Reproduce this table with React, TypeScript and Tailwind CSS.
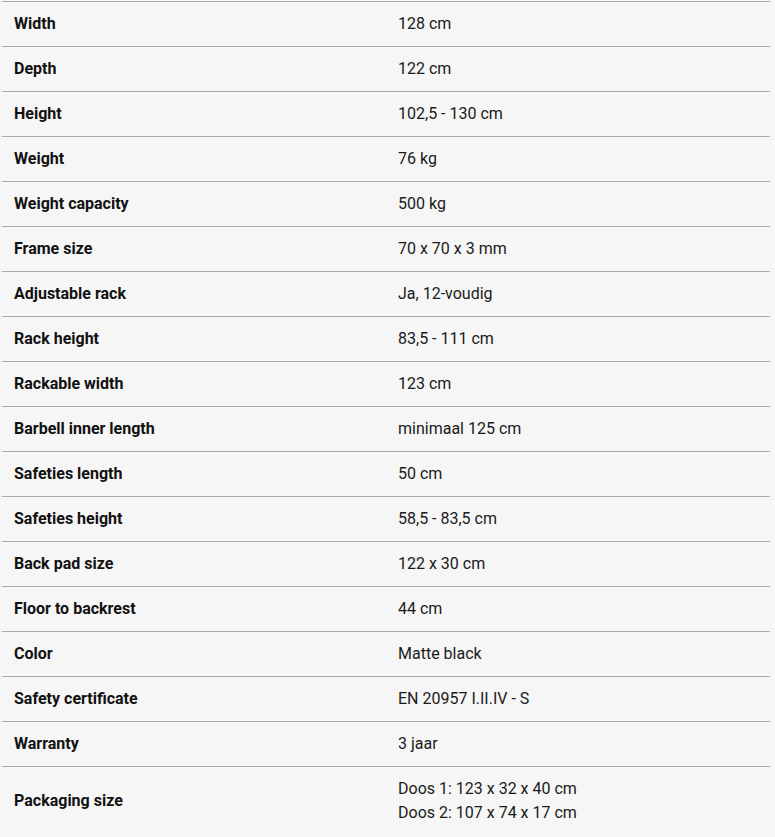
import React from "react";

const rows: [string, string[]][] = [
  ["Width", ["128 cm"]],
  ["Depth", ["122 cm"]],
  ["Height", ["102,5 - 130 cm"]],
  ["Weight", ["76 kg"]],
  ["Weight capacity", ["500 kg"]],
  ["Frame size", ["70 x 70 x 3 mm"]],
  ["Adjustable rack", ["Ja, 12-voudig"]],
  ["Rack height", ["83,5 - 111 cm"]],
  ["Rackable width", ["123 cm"]],
  ["Barbell inner length", ["minimaal 125 cm"]],
  ["Safeties length", ["50 cm"]],
  ["Safeties height", ["58,5 - 83,5 cm"]],
  ["Back pad size", ["122 x 30 cm"]],
  ["Floor to backrest", ["44 cm"]],
  ["Color", ["Matte black"]],
  ["Safety certificate", ["EN 20957 I.II.IV - S"]],
  ["Warranty", ["3 jaar"]],
  ["Packaging size", ["Doos 1: 123 x 32 x 40 cm", "Doos 2: 107 x 74 x 17 cm"]],
];

export default function App() {
  return (
    <div
      className="min-h-screen w-[775px] bg-[#f6f6f6] pt-px text-[16px] leading-6 text-[#111]"
      style={{ fontFamily: "Roboto, 'Liberation Sans', sans-serif" }}
    >
      <div className="ml-[2px] w-[768px]">
        {rows.map(([label, vals]) => (
          <div key={label} className="flex border-t border-[#a9a8b2]">
            <div className="flex w-[384px] items-center py-[10px] pl-[12px] font-bold">
              {label}
            </div>
            <div className="flex flex-col justify-center py-[10px] pl-[12px] text-[#1a1a1a]">
              {vals.map((v) => (
                <div key={v}>{v}</div>
              ))}
            </div>
          </div>
        ))}
      </div>
    </div>
  );
}
